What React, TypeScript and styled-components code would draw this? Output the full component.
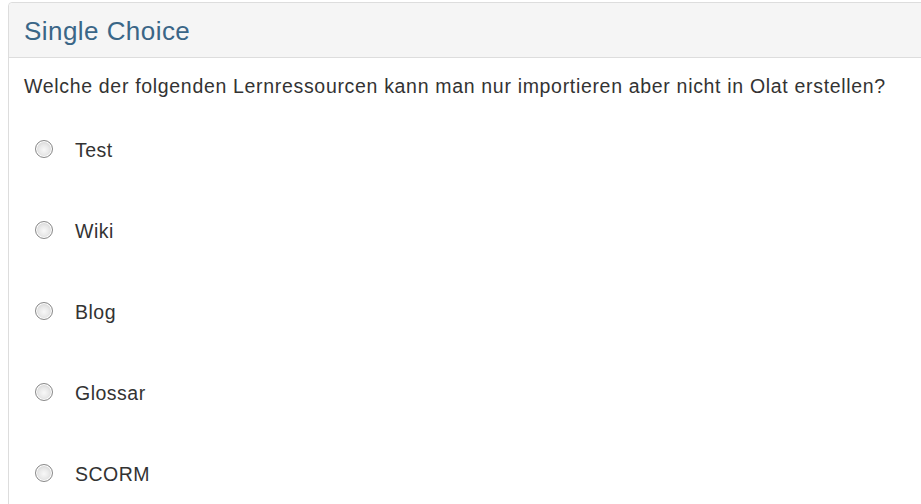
import React from "react";
import styled, { createGlobalStyle } from "styled-components";

const Global = createGlobalStyle`
  html, body { margin: 0; padding: 0; background: #fff; }
  body { font-family: "Liberation Sans", Arial, sans-serif; color: #333; }
`;

const Panel = styled.section`
  margin: 2px -20px 0 8px;
  border: 1px solid #dddddd;
  border-radius: 4px;
  background: #fff;
  min-height: 560px;
`;

const Header = styled.header`
  height: 55px;
  box-sizing: border-box;
  background: #f5f5f5;
  border-bottom: 1px solid #dddddd;
  border-radius: 4px 4px 0 0;
  display: flex;
  align-items: center;
  padding: 2px 15px 0 15px;
`;

const Title = styled.h3`
  margin: 0;
  font-weight: normal;
  font-size: 26px;
  letter-spacing: 0.45px;
  color: #3a6687;
  font-family: "Liberation Sans", Arial, sans-serif;
`;

const Body = styled.div`
  padding: 15px 15px 0 15px;
`;

const Question = styled.p`
  margin: 0 0 38px 0;
  font-size: 19.5px;
  letter-spacing: 0.68px;
  line-height: 26px;
  white-space: nowrap;
`;

const Options = styled.div`
  display: flex;
  flex-direction: column;
  gap: 55px;
`;

const Option = styled.label`
  display: flex;
  align-items: center;
  height: 26px;
  font-size: 19.5px;
  letter-spacing: 0.5px;
  padding-left: 11px;
`;

const Radio = styled.span`
  width: 18px;
  height: 18px;
  box-sizing: border-box;
  border-radius: 50%;
  border: 1px solid #8a8a8a;
  background: radial-gradient(circle at 50% 55%, #f8f8f8 0%, #e9e9e9 40%, #c8c8c8 100%);
  box-shadow: inset 0 0 0 1px #fff;
  margin: -2px 22px 0 0;
  flex: none;
`;

const options = ["Test", "Wiki", "Blog", "Glossar", "SCORM"];

export default function App() {
  return (
    <>
      <Global />
      <Panel>
        <Header>
          <Title>Single Choice</Title>
        </Header>
        <Body>
          <Question>
            Welche der folgenden Lernressourcen kann man nur importieren aber nicht in Olat erstellen?
          </Question>
          <Options>
            {options.map((o) => (
              <Option key={o}>
                <Radio />
                {o}
              </Option>
            ))}
          </Options>
        </Body>
      </Panel>
    </>
  );
}
